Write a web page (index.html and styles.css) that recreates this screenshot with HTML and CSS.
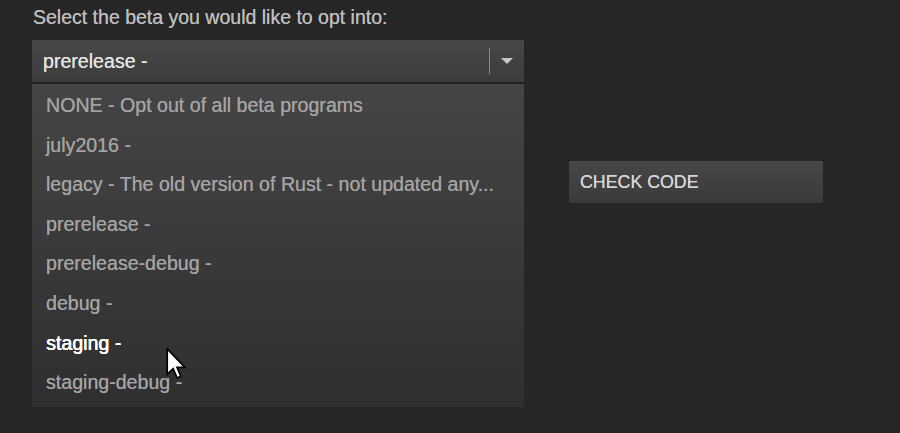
FILE: index.html
```html
<!DOCTYPE html>
<html lang="en">
<head>
    <meta charset="UTF-8">
    <title>Betas</title>
    <link rel="stylesheet" href="styles.css">
</head>
<body>
    <div class="page">
        <div class="left">
            <div class="label">Select the beta you would like to opt into:</div>
            <div class="select">
                <span class="select-text">prerelease -</span>
                <span class="divider"></span>
                <span class="arrow"></span>
            </div>
            <ul class="options">
                <li>NONE - Opt out of all beta programs</li>
                <li>july2016 -</li>
                <li>legacy - The old version of Rust - not updated any...</li>
                <li>prerelease -</li>
                <li>prerelease-debug -</li>
                <li>debug -</li>
                <li class="hover">staging -
                    <svg class="cursor" width="21" height="32" viewBox="0 0 12 19">
                        <path d="M0.5 0.5 L0.5 15.5 L4 12.3 L6.4 17.8 L8.6 16.8 L6.3 11.5 L11 11.5 Z" fill="#fff" stroke="#000" stroke-width="1" stroke-linejoin="miter"/>
                    </svg>
                </li>
                <li>staging-debug -</li>
            </ul>
        </div>
        <div class="right">
            <button class="btn">CHECK CODE</button>
        </div>
    </div>
</body>
</html>
```

FILE: styles.css
```css
body {
    background-color: #262626;
    margin: 0;
    font-family: Arial, "Liberation Sans", sans-serif;
    overflow: hidden;
}
.page {
    display: flex;
    padding: 6px 0 0 32px;
}
.left {
    width: 492px;
}
.label {
    color: #bdbdbd;
    font-size: 19.5px;
    padding-left: 1px;
    line-height: 22px;
    margin-bottom: 12px;
    text-shadow: 0 0 0.5px #bdbdbd;
}
.select {
    height: 42px;
    display: flex;
    align-items: center;
    background: linear-gradient(#474747, #3c3c3c);
    box-shadow: 0 1px 0 #1c1c1c;
}
.select-text {
    flex: 1;
    padding-left: 11px;
    color: #e4e4e4;
    font-size: 19.6px;
    text-shadow: 0 0 0.5px #e4e4e4;
}
.divider {
    width: 1px;
    height: 26px;
    background: #8a8a8a;
    margin-right: 11px;
}
.arrow {
    width: 0;
    height: 0;
    border-left: 6px solid transparent;
    border-right: 6px solid transparent;
    border-top: 6px solid #c8c8c8;
    margin-right: 11px;
}
.options {
    list-style: none;
    margin: 2px 0 0;
    padding: 2px 0 4px;
    background: linear-gradient(#454545, #2f2f2f);
}
.options li {
    position: relative;
    height: 39.6px;
    line-height: 39.6px;
    padding-left: 14px;
    color: #a3a3a3;
    font-size: 19.6px;
    text-shadow: 0 0 0.5px #a3a3a3;
}
.options li.hover {
    color: #ffffff;
    text-shadow: 0.4px 0 0 #ffffff, 0 0 0.6px #ffffff;
}
.cursor {
    position: absolute;
    left: 134px;
    top: 24px;
}
.right {
    padding: 155px 0 0 45px;
}
.btn {
    width: 254px;
    height: 42px;
    border: none;
    background: linear-gradient(#474747, #3a3a3a);
    color: #d6d6d6;
    font-family: Arial, "Liberation Sans", sans-serif;
    font-size: 17.8px;
    text-align: left;
    padding: 0 11px;
    text-shadow: 0 0 0.5px #d6d6d6;
}
```
